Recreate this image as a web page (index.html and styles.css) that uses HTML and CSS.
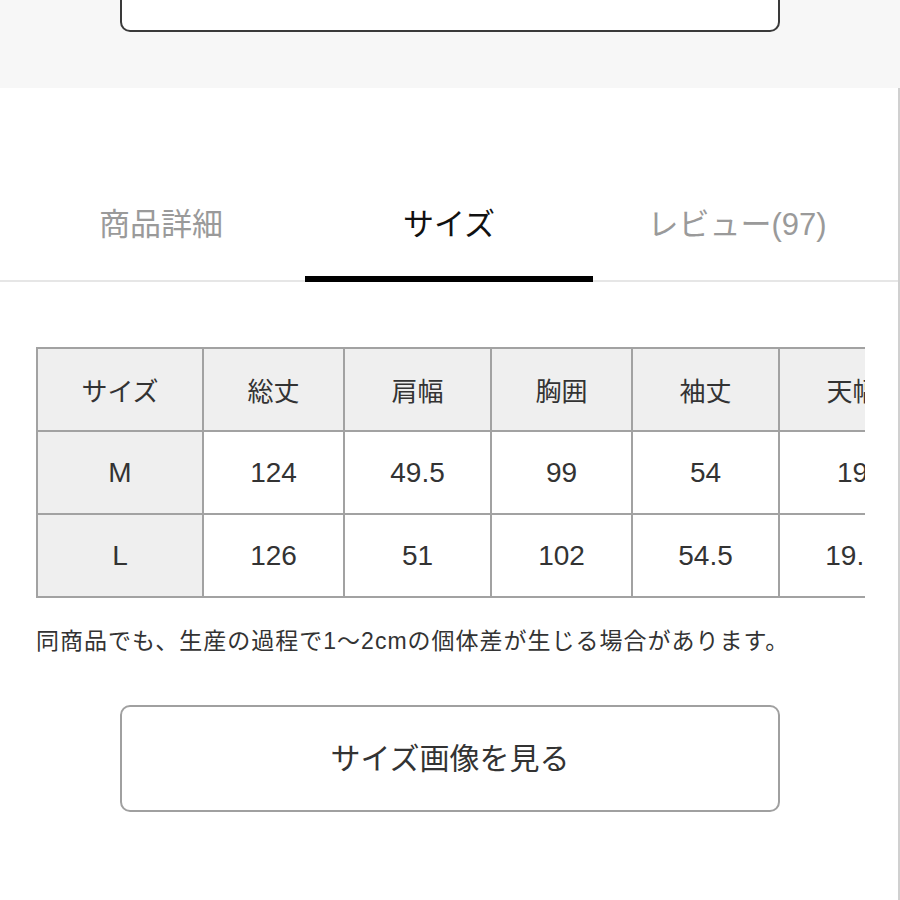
FILE: index.html
```html
<!DOCTYPE html>
<html lang="ja">
<head>
<meta charset="utf-8">
<link rel="stylesheet" href="styles.css">
</head>
<body>
<div class="top-area">
  <div class="top-btn"></div>
</div>
<div class="main">
  <div class="tabs">
    <div class="tab">商品詳細</div>
    <div class="tab active">サイズ</div>
    <div class="tab">レビュー(97)</div>
  </div>
  <div class="table-wrap">
    <table class="size-table">
      <colgroup>
        <col class="c-first"><col class="c-a"><col class="c-b"><col class="c-a"><col class="c-b"><col class="c-b">
      </colgroup>
      <tr class="head">
        <th>サイズ</th><th>総丈</th><th>肩幅</th><th>胸囲</th><th>袖丈</th><th>天幅</th>
      </tr>
      <tr>
        <th class="num">M</th><td>124</td><td>49.5</td><td>99</td><td>54</td><td>19</td>
      </tr>
      <tr>
        <th class="num">L</th><td>126</td><td>51</td><td>102</td><td>54.5</td><td>19.5</td>
      </tr>
    </table>
  </div>
  <p class="note">同商品でも、生産の過程で1～2cmの個体差が生じる場合があります。</p>
  <div class="btn-row">
    <button class="img-btn">サイズ画像を見る</button>
  </div>
</div>
</body>
</html>
```

FILE: styles.css
```css
html, body {
  margin: 0;
  padding: 0;
  background: #ffffff;
}
body {
  font-family: "Liberation Sans", "Noto Sans CJK JP", sans-serif;
  color: #333333;
  width: 900px;
  height: 900px;
  overflow: hidden;
}
.top-area {
  background: #f7f7f7;
  height: 88px;
  padding: 0 120px;
  box-sizing: border-box;
}
.top-btn {
  height: 32px;
  box-sizing: border-box;
  background: #ffffff;
  border: 2px solid #3a3a3a;
  border-top: 0;
  border-radius: 0 0 10px 10px;
}
.main {
  border-right: 2px solid #d0d0d0;
  height: 812px;
  box-sizing: border-box;
}
.tabs {
  display: grid;
  grid-template-columns: 288px 288px 288px;
  padding: 0 18px 0 17px;
  border-bottom: 2px solid #e6e6e6;
}
.tab {
  margin-top: 117px;
  font-size: 31px;
  line-height: 40px;
  text-align: center;
  color: #9a9a9a;
  padding-bottom: 31px;
  border-bottom: 6px solid transparent;
  margin-bottom: -2px;
}
.tab.active {
  color: #111111;
  border-bottom-color: #000000;
}
.table-wrap {
  margin: 65px 0 0 36px;
  width: 829px;
  overflow: hidden;
}
.size-table {
  border-collapse: collapse;
  table-layout: fixed;
  width: 889px;
}
.c-first { width: 166px; }
.c-a { width: 141px; }
.c-b { width: 147px; }
.size-table th,
.size-table td {
  border: 2px solid #a2a2a2;
  height: 81px;
  padding: 0;
  text-align: center;
  font-size: 26px;
  font-weight: normal;
  color: #333333;
  white-space: nowrap;
}
.size-table td,
.size-table th.num {
  font-size: 28px;
}
.size-table th {
  background: #efefef;
}
.size-table td {
  background: #ffffff;
}
.note {
  margin: 27px 0 0 36px;
  font-size: 23px;
  line-height: 32px;
  letter-spacing: 1px;
  color: #333333;
}
.btn-row {
  padding: 0 118px 0 120px;
  margin-top: 48px;
}
.img-btn {
  display: block;
  width: 100%;
  height: 107px;
  padding: 0 0 6px;
  background: #ffffff;
  border: 2px solid #a0a0a0;
  border-radius: 10px;
  font-family: "Liberation Sans", "Noto Sans CJK JP", sans-serif;
  font-size: 30px;
  color: #333333;
  cursor: pointer;
}
```
